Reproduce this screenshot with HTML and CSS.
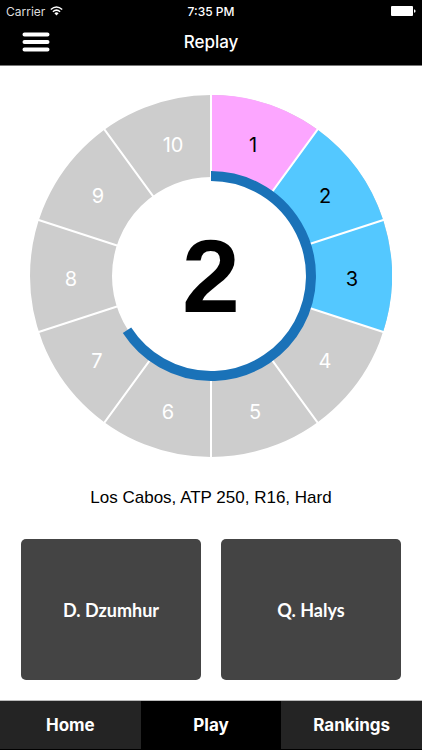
FILE: index.html
```html
<!DOCTYPE html>
<html lang="en">
<head>
    <meta charset="UTF-8">
    <meta name="viewport" content="width=device-width, initial-scale=1.0">
    <title>Replay</title>
    <link rel="stylesheet" href="styles.css">
</head>
<body>
    <header class="header">
        <div class="status-bar">
            <span class="carrier">
                Carrier
                <svg class="wifi" width="13" height="10" viewBox="0 0 13 10" aria-hidden="true">
                    <path d="M0.8 3.5 Q6.5 -1.6 12.2 3.5" fill="none" stroke="#fff" stroke-width="1.5"/>
                    <path d="M2.9 5.7 Q6.5 2.5 10.1 5.7" fill="none" stroke="#fff" stroke-width="1.5"/>
                    <path d="M4.4 7.2 Q6.5 5.5 8.6 7.2 L6.5 9.4 Z" fill="#fff"/>
                </svg>
            </span>
            <span class="time">7:35 PM</span>
            <svg class="battery" width="25" height="10" viewBox="0 0 25 10" aria-label="Battery full">
                <rect x="0" y="0" width="22" height="10" rx="1" fill="#fff"/>
                <path d="M23 3.2 Q24.6 3.6 24.6 5 Q24.6 6.4 23 6.8 Z" fill="#fff"/>
            </svg>
        </div>
        <div class="nav-bar">
            <button class="menu" aria-label="Menu">
                <svg width="28" height="20" viewBox="0 0 28 20">
                    <path d="M2.5 2.5 H25.5 M2.5 10 H25.5 M2.5 17.5 H25.5" stroke="#fff" stroke-width="4" stroke-linecap="round"/>
                </svg>
            </button>
            <h1 class="title">Replay</h1>
        </div>
    </header>

    <main class="content">
        <!-- origin is the centre of the wheel -->
        <svg class="wheel" viewBox="-181 -181 362 362">
            <circle class="ring" r="140"/>
            <path class="ring lost" d="M0 -140 A140 140 0 0 1 82.3 -113.3"/>
            <path class="ring won" d="M82.3 -113.3 A140 140 0 0 1 133.1 43.3"/>
            <path class="divider" d="M0 -182 V-98 M107 -147.2 L57.6 -79.3 M173.1 -56.2 L93.2 -30.3 M173.1 56.2 L93.2 30.3 M107 147.2 L57.6 79.3 M0 182 V98 M-107 147.2 L-57.6 79.3 M-173.1 56.2 L-93.2 30.3 M-173.1 -56.2 L-93.2 -30.3 M-107 -147.2 L-57.6 -79.3"/>
            <path class="timer" d="M0 -100 A100 100 0 1 1 -84 54.3"/>
            <g class="labels">
                <text class="played" x="42" y="-124">1</text>
                <text class="played" x="114" y="-73">2</text>
                <text class="played" x="141" y="10">3</text>
                <text x="114" y="92">4</text>
                <text x="44" y="143">5</text>
                <text x="-43" y="143">6</text>
                <text x="-114" y="92">7</text>
                <text x="-140" y="10">8</text>
                <text x="-113" y="-73">9</text>
                <text x="-38" y="-124">10</text>
            </g>
            <text class="count" x="0" y="36">2</text>
        </svg>

        <p class="match">Los Cabos, ATP 250, R16, Hard</p>

        <div class="players">
            <button class="player">D. Dzumhur</button>
            <button class="player">Q. Halys</button>
        </div>
    </main>

    <nav class="tabs">
        <a class="tab" href="#home">Home</a>
        <a class="tab active" href="#play">Play</a>
        <a class="tab" href="#rankings">Rankings</a>
    </nav>
</body>
</html>
```
FILE: styles.css
```css
* {
    box-sizing: border-box;
}

body {
    display: flex;
    flex-direction: column;
    min-height: 100vh;
    margin: 0;
    background-color: #fff;
    color: #000;
    font-family: Inter, "Liberation Sans", sans-serif;
}

.header {
    background-color: #000;
    color: #fff;
    border-bottom: 1px solid #777;
}

.status-bar {
    display: grid;
    grid-template-columns: 1fr auto 1fr;
    align-items: center;
    height: 22px;
    padding: 0 6px;
    font-size: 12px;
}

.carrier {
    display: flex;
    align-items: center;
    gap: 5px;
    color: #ddd;
}

.time {
    font-weight: 500;
}

.battery {
    justify-self: end;
}

.nav-bar {
    display: grid;
    grid-template-columns: 1fr auto 1fr;
    align-items: center;
    height: 43px;
    padding: 0 22px 3px;
}

.menu {
    display: flex;
    justify-self: start;
    padding: 0;
    border: none;
    background: none;
    cursor: pointer;
}

.title {
    margin: 0;
    font-size: 17px;
    font-weight: 500;
}

.content {
    display: flex;
    flex-direction: column;
    flex: 1;
    padding: 29px 21px 20px;
}

.wheel {
    display: block;
    width: 100%;
    max-width: 362px;
    margin: 0 auto;
}

.ring {
    fill: none;
    stroke: #cdcdcd;
    stroke-width: 82;
}

.lost {
    stroke: #fca6ff;
}

.won {
    stroke: #54c8ff;
}

.divider {
    fill: none;
    stroke: #fff;
    stroke-width: 2;
}

.timer {
    fill: none;
    stroke: #1a72b8;
    stroke-width: 10;
}

.labels {
    fill: #fff;
    font-size: 20px;
    text-anchor: middle;
}

.played {
    fill: #000;
}

.count {
    font-family: "Liberation Sans", Arial, sans-serif;
    font-size: 104px;
    font-weight: 700;
    text-anchor: middle;
}

.match {
    margin: 30px 0;
    font-family: "Liberation Sans", Arial, sans-serif;
    font-size: 17px;
    line-height: 22px;
    text-align: center;
}

.players {
    display: flex;
    flex: 1;
    gap: 20px;
}

.player {
    flex: 1;
    min-height: 120px;
    border: none;
    border-radius: 5px;
    background-color: #444;
    color: #fff;
    font-family: Lato, sans-serif;
    font-size: 18px;
    font-weight: 700;
    cursor: pointer;
}

.tabs {
    display: flex;
    border-top: 1px solid #bbb;
    border-bottom: 1px solid #000;
}

.tab {
    flex: 1;
    background-color: #242424;
    color: #fff;
    font-size: 17px;
    font-weight: 700;
    line-height: 48px;
    text-align: center;
    text-decoration: none;
}

.active {
    background-color: #000;
}
```
